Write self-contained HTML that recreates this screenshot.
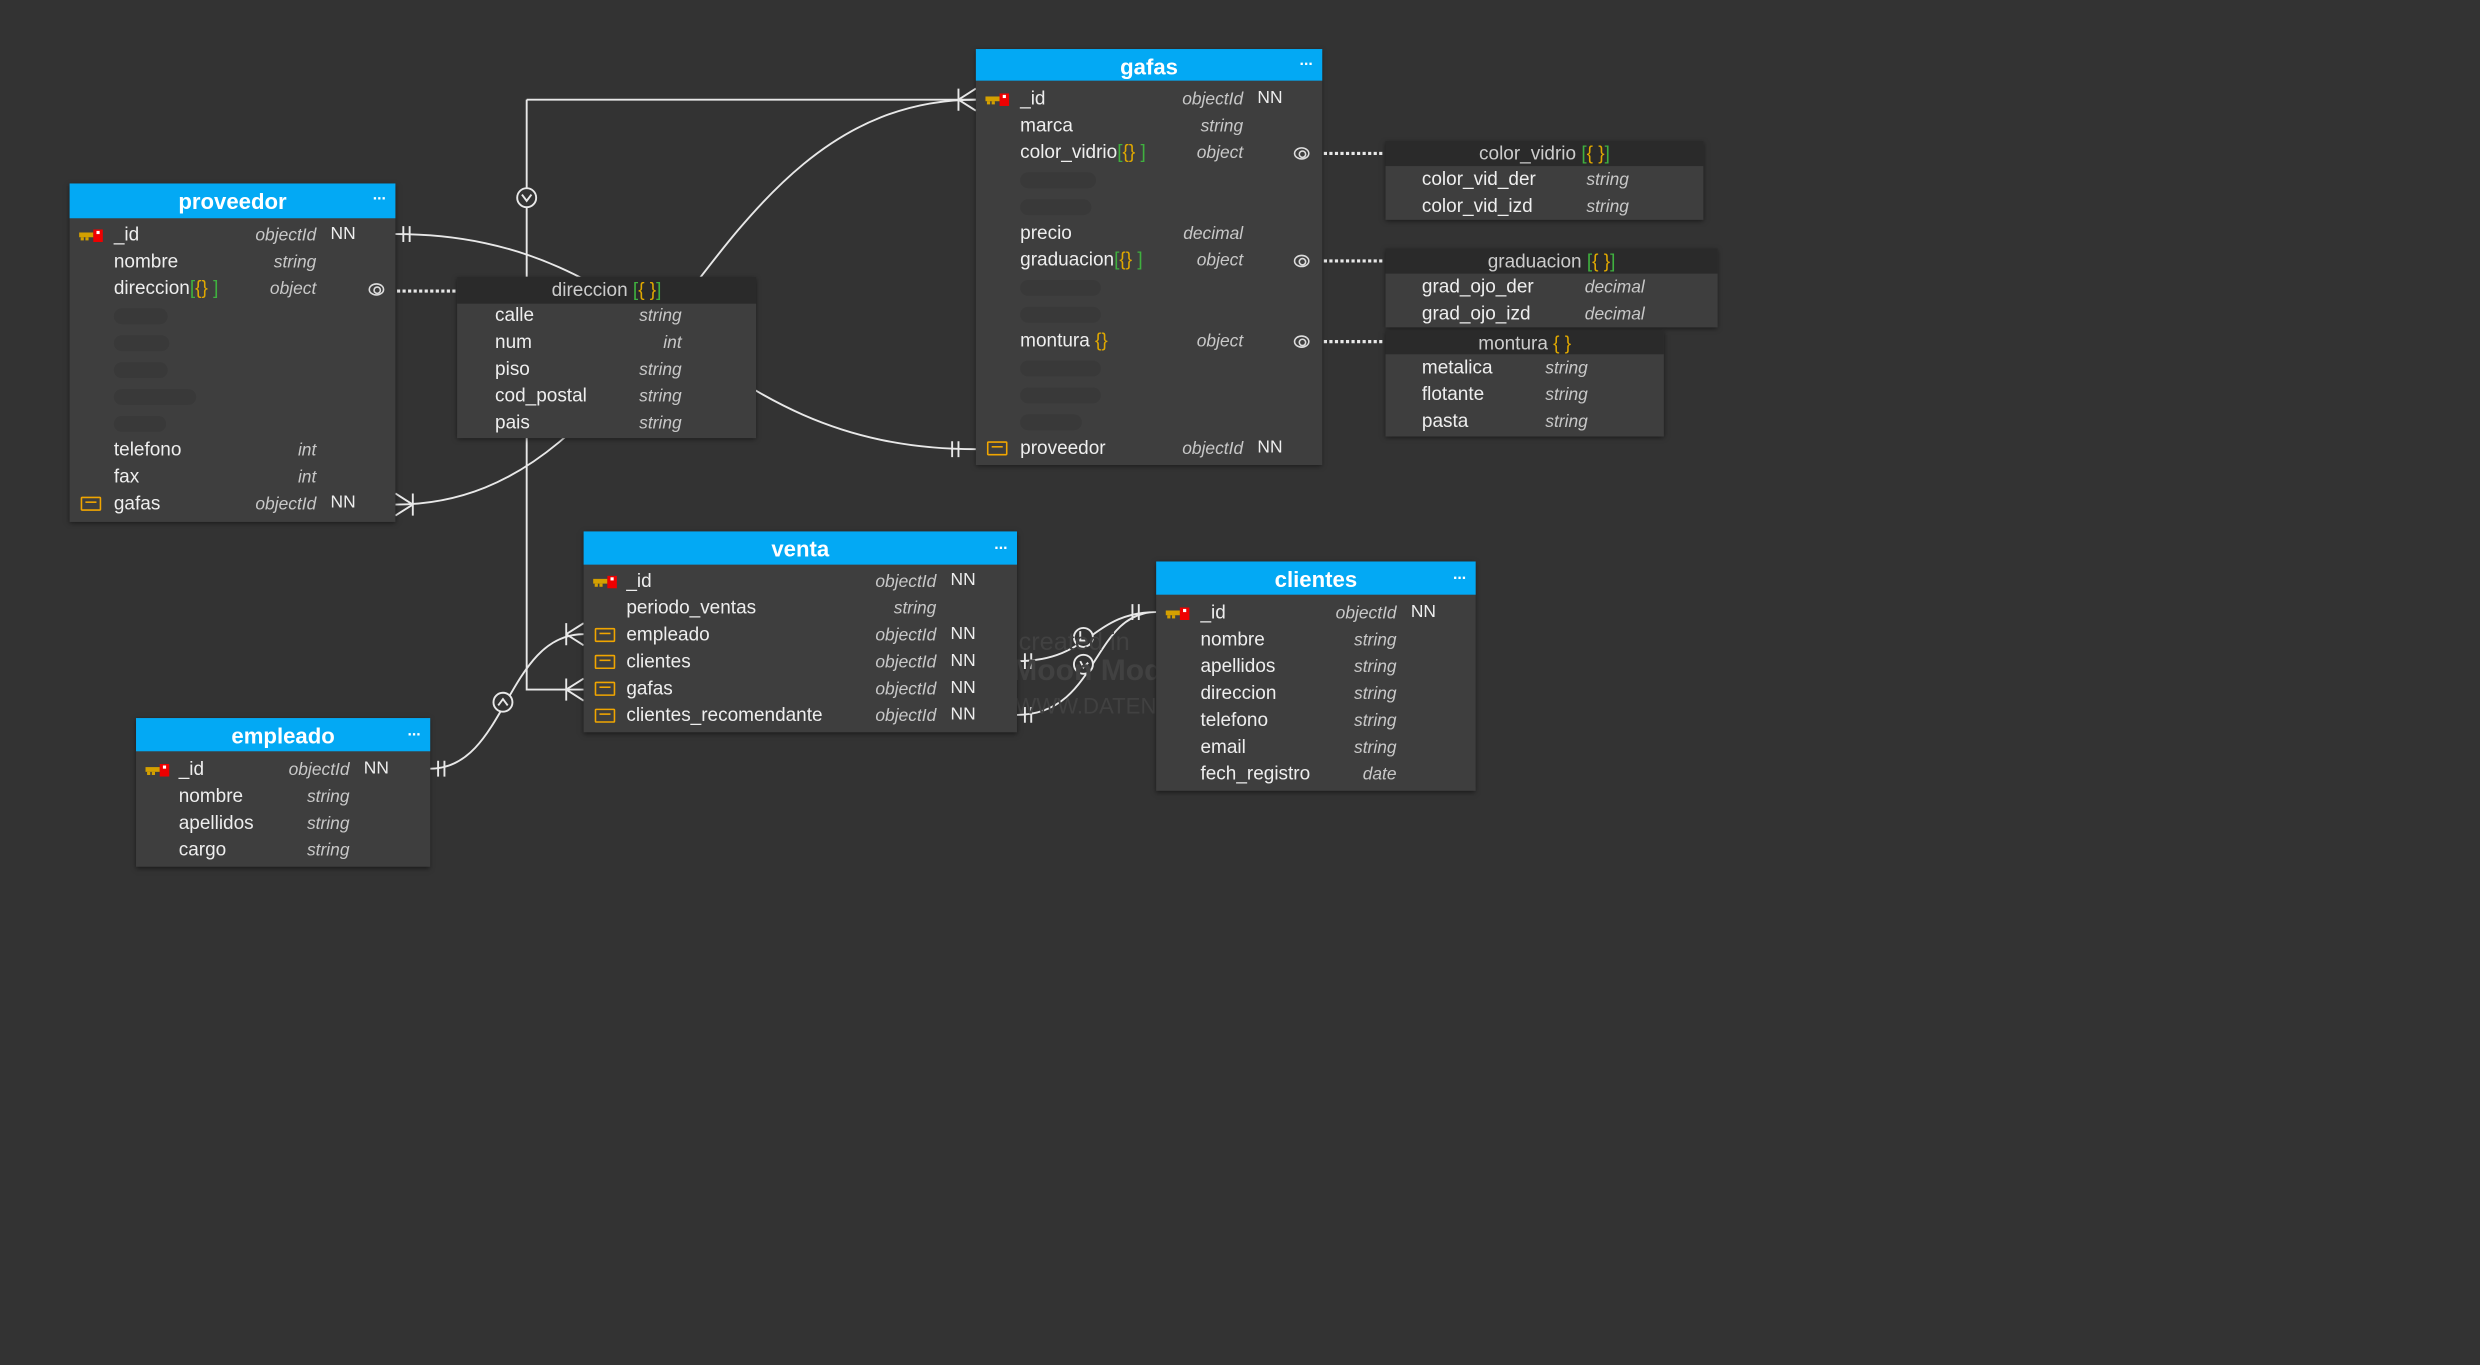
<!DOCTYPE html>
<html><head><meta charset="utf-8"><style>
html,body{margin:0;padding:0;background:#333;overflow:hidden}
#w{position:absolute;left:0;top:0;width:1568px;height:863px;transform:scale(1.58163);transform-origin:0 0;font-family:"Liberation Sans",sans-serif;color:#eee}
.t{position:absolute;background:#3e3e3e;box-shadow:0 1px 3px rgba(0,0,0,.5)}
.h{position:absolute;left:0;right:0;top:0;background:#03a9f4;color:#fff;font-weight:bold;font-size:14px;text-align:center}
.h i{position:absolute;right:6px;top:-3px;font-style:normal;font-size:10px;font-weight:bold}
.s .h{background:#2a2a2a;color:#ccc;font-weight:normal;font-size:12px}
.r{position:absolute;left:0;right:0;height:17px;line-height:17px;font-size:12px;white-space:nowrap}
.n{position:absolute}
.ty{position:absolute;top:1.5px;font-style:italic;color:#c8c8c8;font-size:11px}
.nn{position:absolute;top:0.5px;font-size:11px}
.p{position:absolute;height:10px;top:4px;border-radius:5px;background:#393939}
.y{color:#e0a800}.g{color:#3fb03f}
.k{position:absolute;left:6px;top:5px;width:16px;height:8px}
.f{position:absolute;left:7px;top:4px;width:11px;height:7px;border:1.5px solid #f0a500;border-radius:1px}
.f:after{content:"";position:absolute;left:2px;right:2px;top:2.5px;border-top:1.5px solid #f0a500}
.e{position:absolute;width:8px;height:6px;border:1px solid #ddd;border-radius:50%;top:5px}
.e:after{content:"";position:absolute;left:2px;top:1px;width:3px;height:3px;border:1px solid #ddd;border-radius:50%}
.wm{position:absolute;color:#414141;font-size:16px;line-height:18px}
</style></head><body><div id="w">
<svg width="1568" height="863" style="position:absolute;left:0;top:0" fill="none" stroke="#e8e8e8" stroke-width="1.2">
<path d="M333 63V436H369M333 63H617"/>
<path d="M606 63L617 56M606 63L617 70M606 56V70"/>
<path d="M358 436L369 429M358 436L369 443M358 429V443"/>
<path d="M358 401L369 394M358 401L369 408M358 394V408"/>
<circle cx="333" cy="125" r="6" fill="#333"/><path d="M330 123L333 127L336 123"/>
<path d="M250 148C420 148 440 284 617 284"/>
<path d="M255 143V153M259 143V153M602 279V289M606 279V289"/>
<path d="M250 319C420 319 440 63 617 63"/>
<path d="M261 319L250 312M261 319L250 326M261 312V326"/>
<path d="M272 486C320 486 320 401 369 401"/>
<path d="M277 481V491M281 481V491"/>
<circle cx="318" cy="444" r="6" fill="#333"/><path d="M315 446L318 442L321 446"/>
<path d="M643 418C690 418 690 387 731 387M643 452C695 452 690 387 731 387"/>
<path d="M648 413V423M652 413V423M648 447V457M652 447V457M716 382V392M720 382V392"/>
<circle cx="685" cy="403" r="6" fill="#333"/><path d="M683 399V405H687"/>
<circle cx="685" cy="420" r="6" fill="#333"/><path d="M683 418L685 422L688 419"/>
<g stroke-width="2" stroke-dasharray="2 1.5"><path d="M251 184H288M837 97H875M837 165H875M837 216H875"/></g>
</svg>
<div class="wm" style="left:644px;top:398px">created in</div>
<div class="wm" style="left:640px;top:416px;font-weight:bold;font-size:19px">Moon Modeler</div>
<div class="wm" style="left:642px;top:437px;font-size:14px">WWW.DATENSEN.COM</div>

<!-- proveedor -->
<div class="t" style="left:44px;top:116px;width:206px;height:214px">
<div class="h" style="height:22px;line-height:22px">proveedor<i>...</i></div>
<div class="r" style="top:23.5px"><svg class="k" viewBox="0 0 16 8"><rect x="0" y="2" width="9" height="3" fill="#d4a000"/><rect x="1" y="5" width="2" height="2" fill="#d4a000"/><rect x="4" y="5" width="2" height="2" fill="#d4a000"/><rect x="9" y="0" width="6" height="8" fill="#e00"/><rect x="11" y="1" width="2" height="2" fill="#fff"/></svg><span class="n" style="left:28px">_id</span><span class="ty" style="right:50px">objectId</span><span class="nn" style="left:165px">NN</span></div>
<div class="r" style="top:40.5px"><span class="n" style="left:28px">nombre</span><span class="ty" style="right:50px">string</span></div>
<div class="r" style="top:57.5px"><span class="n" style="left:28px">direccion<span class="g">[</span><span class="y">{}</span> <span class="g">]</span></span><span class="ty" style="right:50px">object</span><span class="e" style="left:189px"></span></div>
<div class="r" style="top:74.5px"><span class="p" style="left:28px;width:34px"></span></div>
<div class="r" style="top:91.5px"><span class="p" style="left:28px;width:35px"></span></div>
<div class="r" style="top:108.5px"><span class="p" style="left:28px;width:34px"></span></div>
<div class="r" style="top:125.5px"><span class="p" style="left:28px;width:52px"></span></div>
<div class="r" style="top:142.5px"><span class="p" style="left:28px;width:33px"></span></div>
<div class="r" style="top:159.5px"><span class="n" style="left:28px">telefono</span><span class="ty" style="right:50px">int</span></div>
<div class="r" style="top:176.5px"><span class="n" style="left:28px">fax</span><span class="ty" style="right:50px">int</span></div>
<div class="r" style="top:193.5px"><span class="f"></span><span class="n" style="left:28px">gafas</span><span class="ty" style="right:50px">objectId</span><span class="nn" style="left:165px">NN</span></div>
</div>

<!-- direccion -->
<div class="t s" style="left:289px;top:175px;width:189px;height:102px">
<div class="h" style="height:17px;line-height:17px">direccion <span class="g">[</span><span class="y">{ }</span><span class="g">]</span></div>
<div class="r" style="top:15.5px"><span class="n" style="left:24px">calle</span><span class="ty" style="right:47px">string</span></div>
<div class="r" style="top:32.5px"><span class="n" style="left:24px">num</span><span class="ty" style="right:47px">int</span></div>
<div class="r" style="top:49.5px"><span class="n" style="left:24px">piso</span><span class="ty" style="right:47px">string</span></div>
<div class="r" style="top:66.5px"><span class="n" style="left:24px">cod_postal</span><span class="ty" style="right:47px">string</span></div>
<div class="r" style="top:83.5px"><span class="n" style="left:24px">pais</span><span class="ty" style="right:47px">string</span></div>
</div>

<!-- gafas -->
<div class="t" style="left:617px;top:31px;width:219px;height:263px">
<div class="h" style="height:20px;line-height:22px">gafas<i>...</i></div>
<div class="r" style="top:22.5px"><svg class="k" viewBox="0 0 16 8"><rect x="0" y="2" width="9" height="3" fill="#d4a000"/><rect x="1" y="5" width="2" height="2" fill="#d4a000"/><rect x="4" y="5" width="2" height="2" fill="#d4a000"/><rect x="9" y="0" width="6" height="8" fill="#e00"/><rect x="11" y="1" width="2" height="2" fill="#fff"/></svg><span class="n" style="left:28px">_id</span><span class="ty" style="right:50px">objectId</span><span class="nn" style="left:178px">NN</span></div>
<div class="r" style="top:39.5px"><span class="n" style="left:28px">marca</span><span class="ty" style="right:50px">string</span></div>
<div class="r" style="top:56.5px"><span class="n" style="left:28px">color_vidrio<span class="g">[</span><span class="y">{}</span> <span class="g">]</span></span><span class="ty" style="right:50px">object</span><span class="e" style="left:201px"></span></div>
<div class="r" style="top:73.5px"><span class="p" style="left:28px;width:48px"></span></div>
<div class="r" style="top:90.5px"><span class="p" style="left:28px;width:45px"></span></div>
<div class="r" style="top:107.5px"><span class="n" style="left:28px">precio</span><span class="ty" style="right:50px">decimal</span></div>
<div class="r" style="top:124.5px"><span class="n" style="left:28px">graduacion<span class="g">[</span><span class="y">{}</span> <span class="g">]</span></span><span class="ty" style="right:50px">object</span><span class="e" style="left:201px"></span></div>
<div class="r" style="top:141.5px"><span class="p" style="left:28px;width:51px"></span></div>
<div class="r" style="top:158.5px"><span class="p" style="left:28px;width:51px"></span></div>
<div class="r" style="top:175.5px"><span class="n" style="left:28px">montura <span class="y">{}</span></span><span class="ty" style="right:50px">object</span><span class="e" style="left:201px"></span></div>
<div class="r" style="top:192.5px"><span class="p" style="left:28px;width:51px"></span></div>
<div class="r" style="top:209.5px"><span class="p" style="left:28px;width:51px"></span></div>
<div class="r" style="top:226.5px"><span class="p" style="left:28px;width:39px"></span></div>
<div class="r" style="top:243.5px"><span class="f"></span><span class="n" style="left:28px">proveedor</span><span class="ty" style="right:50px">objectId</span><span class="nn" style="left:178px">NN</span></div>
</div>

<!-- color_vidrio -->
<div class="t s" style="left:876px;top:89px;width:201px;height:50px">
<div class="h" style="height:16px;line-height:17px">color_vidrio <span class="g">[</span><span class="y">{ }</span><span class="g">]</span></div>
<div class="r" style="top:15.5px"><span class="n" style="left:23px">color_vid_der</span><span class="ty" style="left:127px">string</span></div>
<div class="r" style="top:32.5px"><span class="n" style="left:23px">color_vid_izd</span><span class="ty" style="left:127px">string</span></div>
</div>
<!-- graduacion -->
<div class="t s" style="left:876px;top:157px;width:210px;height:50px">
<div class="h" style="height:16px;line-height:17px">graduacion <span class="g">[</span><span class="y">{ }</span><span class="g">]</span></div>
<div class="r" style="top:15.5px"><span class="n" style="left:23px">grad_ojo_der</span><span class="ty" style="left:126px">decimal</span></div>
<div class="r" style="top:32.5px"><span class="n" style="left:23px">grad_ojo_izd</span><span class="ty" style="left:126px">decimal</span></div>
</div>
<!-- montura -->
<div class="t s" style="left:876px;top:209px;width:176px;height:67px">
<div class="h" style="height:15px;line-height:16px">montura <span class="y">{ }</span></div>
<div class="r" style="top:14.5px"><span class="n" style="left:23px">metalica</span><span class="ty" style="left:101px">string</span></div>
<div class="r" style="top:31.5px"><span class="n" style="left:23px">flotante</span><span class="ty" style="left:101px">string</span></div>
<div class="r" style="top:48.5px"><span class="n" style="left:23px">pasta</span><span class="ty" style="left:101px">string</span></div>
</div>

<!-- venta -->
<div class="t" style="left:369px;top:336px;width:274px;height:127px">
<div class="h" style="height:21px;line-height:23px">venta<i>...</i></div>
<div class="r" style="top:22.5px"><svg class="k" viewBox="0 0 16 8"><rect x="0" y="2" width="9" height="3" fill="#d4a000"/><rect x="1" y="5" width="2" height="2" fill="#d4a000"/><rect x="4" y="5" width="2" height="2" fill="#d4a000"/><rect x="9" y="0" width="6" height="8" fill="#e00"/><rect x="11" y="1" width="2" height="2" fill="#fff"/></svg><span class="n" style="left:27px">_id</span><span class="ty" style="right:51px">objectId</span><span class="nn" style="left:232px">NN</span></div>
<div class="r" style="top:39.5px"><span class="n" style="left:27px">periodo_ventas</span><span class="ty" style="right:51px">string</span></div>
<div class="r" style="top:56.5px"><span class="f"></span><span class="n" style="left:27px">empleado</span><span class="ty" style="right:51px">objectId</span><span class="nn" style="left:232px">NN</span></div>
<div class="r" style="top:73.5px"><span class="f"></span><span class="n" style="left:27px">clientes</span><span class="ty" style="right:51px">objectId</span><span class="nn" style="left:232px">NN</span></div>
<div class="r" style="top:90.5px"><span class="f"></span><span class="n" style="left:27px">gafas</span><span class="ty" style="right:51px">objectId</span><span class="nn" style="left:232px">NN</span></div>
<div class="r" style="top:107.5px"><span class="f"></span><span class="n" style="left:27px">clientes_recomendante</span><span class="ty" style="right:51px">objectId</span><span class="nn" style="left:232px">NN</span></div>
</div>

<!-- clientes -->
<div class="t" style="left:731px;top:355px;width:202px;height:145px">
<div class="h" style="height:21px;line-height:23px">clientes<i>...</i></div>
<div class="r" style="top:23.5px"><svg class="k" viewBox="0 0 16 8"><rect x="0" y="2" width="9" height="3" fill="#d4a000"/><rect x="1" y="5" width="2" height="2" fill="#d4a000"/><rect x="4" y="5" width="2" height="2" fill="#d4a000"/><rect x="9" y="0" width="6" height="8" fill="#e00"/><rect x="11" y="1" width="2" height="2" fill="#fff"/></svg><span class="n" style="left:28px">_id</span><span class="ty" style="right:50px">objectId</span><span class="nn" style="left:161px">NN</span></div>
<div class="r" style="top:40.5px"><span class="n" style="left:28px">nombre</span><span class="ty" style="right:50px">string</span></div>
<div class="r" style="top:57.5px"><span class="n" style="left:28px">apellidos</span><span class="ty" style="right:50px">string</span></div>
<div class="r" style="top:74.5px"><span class="n" style="left:28px">direccion</span><span class="ty" style="right:50px">string</span></div>
<div class="r" style="top:91.5px"><span class="n" style="left:28px">telefono</span><span class="ty" style="right:50px">string</span></div>
<div class="r" style="top:108.5px"><span class="n" style="left:28px">email</span><span class="ty" style="right:50px">string</span></div>
<div class="r" style="top:125.5px"><span class="n" style="left:28px">fech_registro</span><span class="ty" style="right:50px">date</span></div>
</div>

<!-- empleado -->
<div class="t" style="left:86px;top:454px;width:186px;height:94px">
<div class="h" style="height:21px;line-height:23px">empleado<i>...</i></div>
<div class="r" style="top:23.5px"><svg class="k" viewBox="0 0 16 8"><rect x="0" y="2" width="9" height="3" fill="#d4a000"/><rect x="1" y="5" width="2" height="2" fill="#d4a000"/><rect x="4" y="5" width="2" height="2" fill="#d4a000"/><rect x="9" y="0" width="6" height="8" fill="#e00"/><rect x="11" y="1" width="2" height="2" fill="#fff"/></svg><span class="n" style="left:27px">_id</span><span class="ty" style="right:51px">objectId</span><span class="nn" style="left:144px">NN</span></div>
<div class="r" style="top:40.5px"><span class="n" style="left:27px">nombre</span><span class="ty" style="right:51px">string</span></div>
<div class="r" style="top:57.5px"><span class="n" style="left:27px">apellidos</span><span class="ty" style="right:51px">string</span></div>
<div class="r" style="top:74.5px"><span class="n" style="left:27px">cargo</span><span class="ty" style="right:51px">string</span></div>
</div>
</div></body></html>
